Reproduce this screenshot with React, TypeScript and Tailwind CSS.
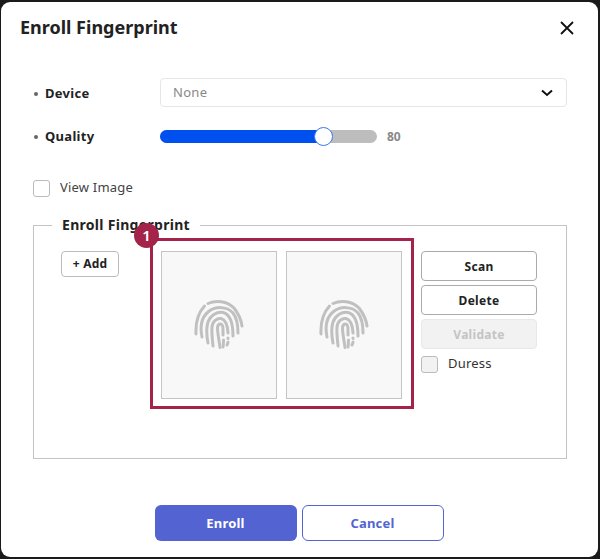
import React from "react";

const font = { fontFamily: '"Noto Sans", sans-serif' };

function FingerprintIcon() {
  return (
    <svg width="50" height="50" viewBox="0 0 50 50" fill="none" stroke="#c0c0c0" strokeWidth="3" strokeLinecap="round">
      <path d="M2 34 C1.500 24 3 14 10.500 6" />
      <path d="M14 3.500 C22 0 33 1 40 8 C44 13 47 19 48 26" />
      <path d="M8 37 C6 27 7 18 14 12 C21 6 33 6 39 13 C43 18 44 26 44 33" />
      <path d="M14 43 C12.500 35 12 28 14 22 C16.500 15 23 11.500 29 12.500 C35 14 39 21 39 36" />
      <path d="M19 46 C18.500 40 17.500 34 18 27 C18.500 21 23 18 27 18.500 C31 19.500 33.500 24 34 33" />
      <path d="M26 47.500 C25 40 23.500 33 23.500 28 C23.500 25 25 24 26.500 24 C28.500 24 29 27 29 30 L29 35" />
      <path d="M29.500 40 C29.500 42 29.500 44 29 47" />
      <path d="M34 38 L34 38.500" />
      <path d="M34 42 C34 43 33.500 44 33 45" />
    </svg>
  );
}

function ScanPanel() {
  return (
    <div className="w-[116px] h-[148px] bg-[#f8f8f8] border border-[#c4c4c4] flex items-center justify-center">
      <FingerprintIcon />
    </div>
  );
}

function Field({ label, labelClass, children }: { label: string; labelClass: string; children: React.ReactNode }) {
  return (
    <div className="flex items-center">
      <div className={`w-[127px] flex items-center text-[13px] font-bold text-[#222] tracking-[0.3px] ${labelClass}`}>
        <span className="w-[4px] h-[4px] rounded-full bg-[#666] ml-[1px] mr-[7px]"></span>
        {label}
      </div>
      {children}
    </div>
  );
}

export default function App() {
  return (
    <div className="w-[600px] h-[559px] bg-[#1a1a1a] pt-[2px] pl-[1px] pr-[2px] pb-[2px]" style={font}>
      <div className="relative h-full bg-white rounded-[9px] pl-[19px] pt-[13px]">
        <div className="flex items-center justify-between pr-[23px]">
          <h1 className="text-[18px] leading-[24px] font-bold text-[#222]">Enroll Fingerprint</h1>
          <svg width="16" height="16" viewBox="0 0 16 16" stroke="#111" strokeWidth="1.800" className="mt-[1px]">
            <path d="M2 2 L14 14 M14 2 L2 14" />
          </svg>
        </div>

        <div className="pl-[13px] pr-[31px] mt-[39px]">
          <Field label="Device" labelClass="mt-[3px]">
            <div className="flex-1 h-[29px] border border-[#e6e6e6] rounded-[4px] flex items-center justify-between pl-[12px] pr-[13px] text-[13px] text-[#888] tracking-[0.3px]">
              <span>None</span>
              <svg width="12" height="8" viewBox="0 0 12 8" fill="none" stroke="#111" strokeWidth="2">
                <path d="M1 1.500 L6 6 L11 1.500" />
              </svg>
            </div>
          </Field>

          <div className="mt-[20px]">
            <Field label="Quality" labelClass="mt-0">
              <div className="flex items-center">
                <div className="relative w-[217px] h-[13px] rounded-full bg-[#bdbdbd]">
                  <div className="h-full w-[163px] rounded-l-full bg-[#0050f0]"></div>
                  <div className="absolute left-[154px] -top-[3px] w-[19px] h-[19px] rounded-full bg-white border border-[#3a78f2]"></div>
                </div>
                <span className="ml-[10px] text-[12px] font-bold text-[#888]">80</span>
              </div>
            </Field>
          </div>

          <label className="flex items-center mt-[33px]">
            <span className="w-[17px] h-[17px] rounded-[3px] border border-[#bbb] bg-white"></span>
            <span className="ml-[10px] text-[13px] text-[#444] tracking-[0.2px] -mt-[2px]">View Image</span>
          </label>

          <fieldset className="relative mt-[19px] h-[243px] border border-[#c4c4c4] pl-[26px] pt-[17px]">
            <legend className="-ml-[8px] px-[10px] text-[14px] leading-[18px] font-bold text-[#222] tracking-[0.3px]">Enroll Fingerprint</legend>
            <div className="flex items-start">
              <button className="ml-[1px] w-[58px] h-[26px] border border-[#bbb] rounded-[4px] text-[12px] font-bold text-[#222] tracking-[0.2px]">+ Add</button>
              <div className="ml-[42px] flex gap-[9px]">
                <ScanPanel />
                <ScanPanel />
              </div>
              <div className="ml-[19px] w-[116px] flex flex-col gap-[4px]">
                <button className="h-[30px] pt-[2px] border border-[#aaa] rounded-[4px] text-[12px] font-bold text-[#222] tracking-[0.3px]">Scan</button>
                <button className="h-[30px] pt-[2px] border border-[#aaa] rounded-[4px] text-[12px] font-bold text-[#222] tracking-[0.3px]">Delete</button>
                <button className="h-[30px] pt-[2px] border border-[#e8e8e8] bg-[#f2f2f2] rounded-[4px] text-[12px] font-bold text-[#c4c4c4] tracking-[0.3px]">Validate</button>
                <label className="flex items-center mt-[3px]">
                  <span className="w-[17px] h-[17px] rounded-[3px] border border-[#bbb] bg-[#f2f2f2]"></span>
                  <span className="ml-[10px] text-[13px] text-[#333] tracking-[0.2px] -mt-[2px]">Duress</span>
                </label>
              </div>
            </div>
          </fieldset>

          <div className="flex justify-center gap-[5px] mt-[46px] pr-[2px]">
            <button className="w-[142px] h-[36px] pt-[2px] rounded-[6px] bg-[#5364d2] text-white text-[13px] font-bold tracking-[0.2px]">Enroll</button>
            <button className="w-[142px] h-[36px] pt-[2px] rounded-[6px] border border-[#5364d2] bg-white text-[#5364d2] text-[13px] font-bold tracking-[0.2px]">Cancel</button>
          </div>
        </div>

        {/* annotation over the screenshot */}
        <div className="absolute left-[149px] top-[236px] w-[264px] h-[171px] border-[3px] border-[#a3234a]"></div>
        <div className="absolute left-[133px] top-[221px] w-[25px] h-[25px] rounded-full bg-[#a3234a] text-white text-[15px] font-semibold flex items-center justify-center">1</div>
      </div>
    </div>
  );
}
